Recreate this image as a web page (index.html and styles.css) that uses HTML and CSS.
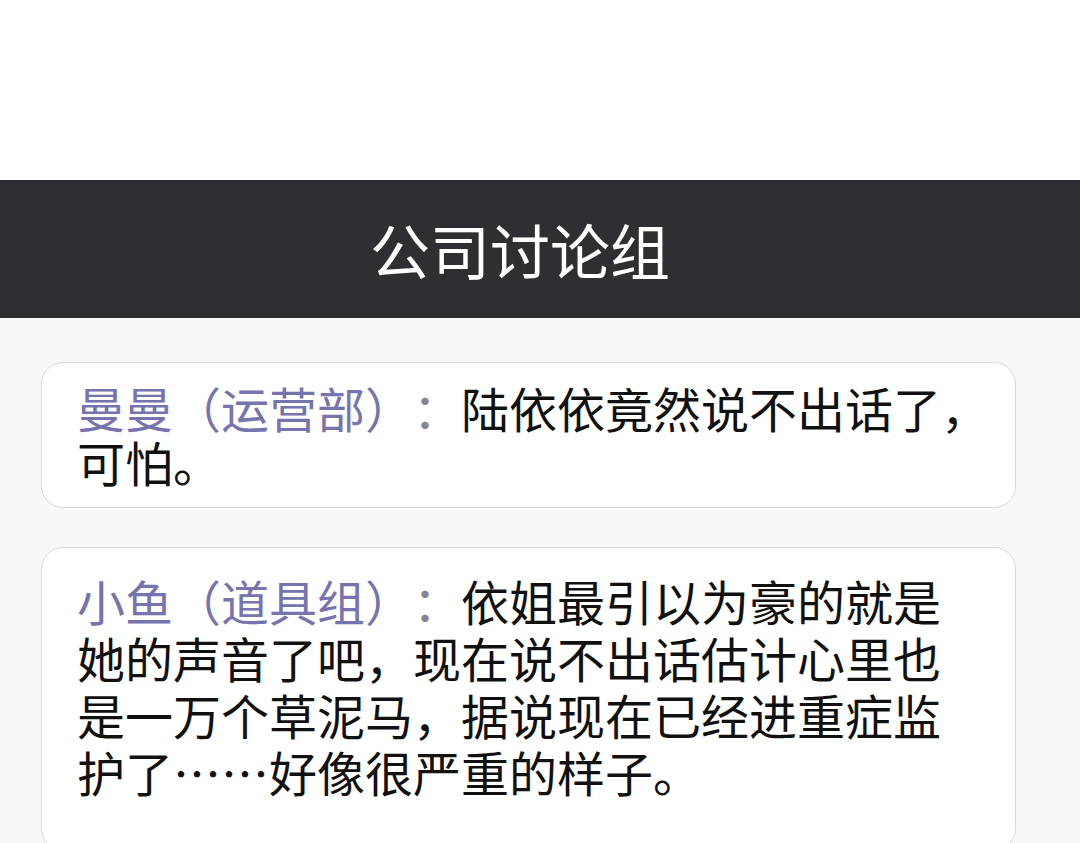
FILE: index.html
```html
<!DOCTYPE html>
<html lang="zh-CN">
<head>
    <meta charset="UTF-8" />
    <meta name="viewport" content="width=device-width, initial-scale=1.0" />
    <title>公司讨论组</title>
    <link rel="stylesheet" href="styles.css">
</head>
<body>
    <div class="top-space"></div>

    <header class="chat-header">
        <h1>公司讨论组</h1>
    </header>

    <main class="chat-list">
        <div class="msg msg-short">
            <span class="name">曼曼（运营部）</span><span class="colon">：</span>陆依依竟然说不出话了，可怕。
        </div>

        <div class="msg msg-long">
            <span class="name">小鱼（道具组）</span><span class="colon">：</span>依姐最引以为豪的就是她的声音了吧，现在说不出话估计心里也是一万个草泥马，据说现在已经进重症监护了……好像很严重的样子。
        </div>
    </main>
</body>
</html>
```

FILE: styles.css
```css
/* Basic reset */
* {
    margin: 0;
    padding: 0;
    box-sizing: border-box;
}

body {
    font-family: "Noto Sans CJK SC", "Noto Sans", sans-serif;
    background-color: #f8f8f8;
    color: #111;
    min-height: 100vh;
    overflow: hidden;
}

/* Blank strip above the title bar */
.top-space {
    height: 180px;
    background-color: #fff;
}

/* Dark title bar */
.chat-header {
    height: 138px;
    background-color: #2f2e32;
    display: flex;
    justify-content: center;
    align-items: center;
    padding-right: 40px;
}

.chat-header h1 {
    color: #fff;
    font-size: 60px;
    font-weight: 400;
    line-height: 1;
}

/* Message cards */
.chat-list {
    display: flex;
    flex-direction: column;
    gap: 39px;
    padding: 44px 0 0 41px;
}

.msg {
    width: 975px;
    background-color: #fff;
    border: 1px solid #d9d9d9;
    border-radius: 22px;
    font-size: 48px;
    padding: 24px 42px 50px 35px;
    line-height: 57px;
}

/* the trailing comma may sit right at the edge */
.msg-short {
    line-height: 54px;
    padding: 17px 24px 19px 35px;
}

/* keep full-width brackets and colon at full width */
.name,
.colon {
    text-spacing-trim: space-all;
}

.name {
    color: #7674ae;
}

.colon {
    color: #85849c;
}
```
